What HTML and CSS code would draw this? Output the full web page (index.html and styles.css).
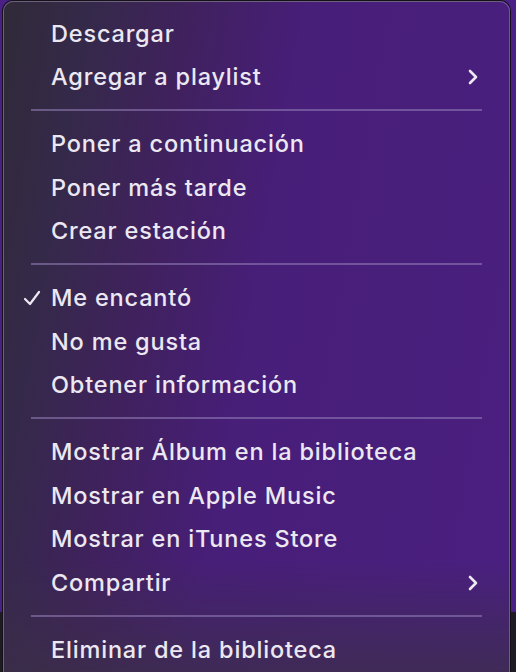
FILE: index.html
```html
<!DOCTYPE html>
<html lang="es">
<head>
  <meta charset="UTF-8">
  <meta name="viewport" content="width=device-width, initial-scale=1.0">
  <title>Menú contextual</title>
  <link rel="stylesheet" href="styles.css">
</head>
<body>

  <div class="menu">
    <div class="item">Descargar</div>
    <div class="item">Agregar a playlist
      <svg class="chevron" viewBox="0 0 12 16"><path d="M3 2 L9 8 L3 14"/></svg>
    </div>

    <div class="sep"></div>

    <div class="item">Poner a continuación</div>
    <div class="item">Poner más tarde</div>
    <div class="item">Crear estación</div>

    <div class="sep"></div>

    <div class="item">
      <svg class="check" viewBox="0 0 18 16"><path d="M2 9 L7 14 L16 2"/></svg>
      Me encantó
    </div>
    <div class="item">No me gusta</div>
    <div class="item">Obtener información</div>

    <div class="sep"></div>

    <div class="item">Mostrar Álbum en la biblioteca</div>
    <div class="item">Mostrar en Apple Music</div>
    <div class="item">Mostrar en iTunes Store</div>
    <div class="item">Compartir
      <svg class="chevron" viewBox="0 0 12 16"><path d="M3 2 L9 8 L3 14"/></svg>
    </div>

    <div class="sep"></div>

    <div class="item">Eliminar de la biblioteca</div>
  </div>

</body>
</html>
```

FILE: styles.css
```css
* {
  box-sizing: border-box;
}
body {
  margin: 0;
  height: 672px;
  overflow: hidden;
  background: linear-gradient(to bottom, #4a1f86 0, #4a1f86 612px, #1e1c22 612px);
  font-family: Inter, "Noto Sans", sans-serif;
}
.menu {
  margin: 1px 0 0 3px;
  width: 507px;
  height: 700px;
  padding-top: 9.5px;
  border-radius: 10px;
  border: 1px solid rgba(170, 160, 190, 0.45);
  box-shadow: 0 0 0 1px #141218;
  background:
    linear-gradient(to top, rgba(58, 48, 68, 0.85) 0, rgba(58, 48, 68, 0) 140px),
    linear-gradient(100deg, #302a38 0%, #35294a 14%, #40215e 30%, #471e78 48%, #4a1f80 100%);
}
.item {
  position: relative;
  height: 43.5px;
  display: flex;
  align-items: center;
  padding-left: 47px;
  color: #ece8f2;
  font-size: 23.5px;
  font-weight: 500;
  letter-spacing: 0.82px;
}
.sep {
  height: 23.5px;
  display: flex;
  align-items: center;
  padding: 0 27px 0 27px;
}
.sep::before {
  content: "";
  flex: 1;
  height: 2px;
  background: rgba(150, 130, 185, 0.55);
}
.chevron {
  position: absolute;
  left: 463px;
  top: 14px;
  width: 12px;
  height: 16px;
  fill: none;
  stroke: #ece8f2;
  stroke-width: 2.6;
  stroke-linecap: round;
  stroke-linejoin: round;
}
.check {
  position: absolute;
  left: 19px;
  top: 14px;
  width: 18px;
  height: 16px;
  fill: none;
  stroke: #ece8f2;
  stroke-width: 2.2;
  stroke-linecap: round;
  stroke-linejoin: round;
}
```
